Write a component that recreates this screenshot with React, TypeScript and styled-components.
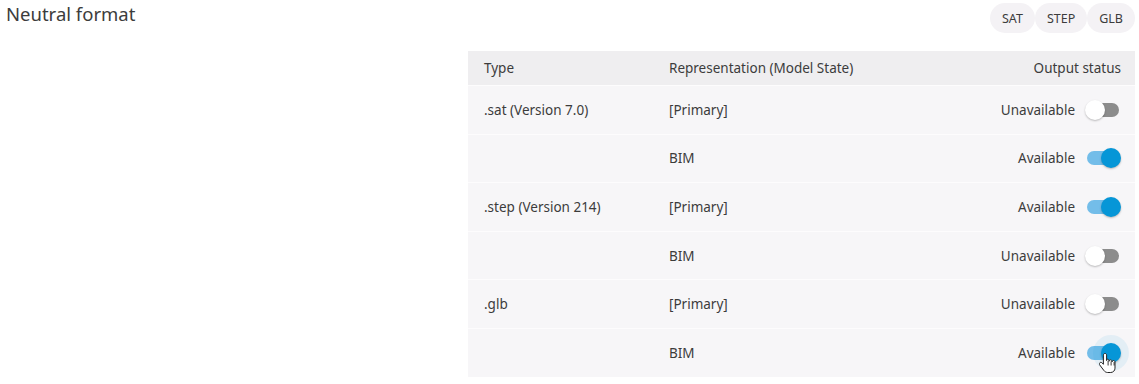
import React from "react";
import styled, { createGlobalStyle } from "styled-components";

const Global = createGlobalStyle`
  html, body { margin: 0; padding: 0; background: #ffffff; }
  body { font-family: "Noto Sans", "Open Sans", sans-serif; color: #3c3c3c; }
`;

const Page = styled.div`
  width: 1139px;
  height: 384px;
  box-sizing: border-box;
  padding: 3px 4px 0 6px;
  display: flex;
  flex-direction: column;
  gap: 18px;
`;

const TopBar = styled.div`
  display: flex;
  justify-content: space-between;
  align-items: flex-start;
`;

const Title = styled.h2`
  margin: 0;
  font-size: 18.5px;
  font-weight: 400;
  line-height: 22px;
  color: #3c3c3c;
`;

const Chips = styled.div`
  display: flex;
`;

const Chip = styled.span`
  height: 30px;
  padding: 0 12px;
  border-radius: 15px;
  background: #f4f2f5;
  display: flex;
  align-items: center;
  font-size: 12.5px;
  color: #3c3c3c;
`;

const Table = styled.div`
  align-self: flex-end;
  width: 667px;
  background: #f7f6f8;
`;

const Row = styled.div<{ $head?: boolean }>`
  display: grid;
  grid-template-columns: 185px 1fr auto;
  align-items: center;
  box-sizing: border-box;
  height: ${(p) => (p.$head ? "34px" : "48.6px")};
  padding: 0 14px 0 16px;
  background: ${(p) => (p.$head ? "#efeef0" : "#f7f6f8")};
  border-top: ${(p) => (p.$head ? "none" : "1px solid #fdfcfd")};
  font-size: 13.5px;
  color: #3c3c3c;
`;

const Cell = styled.div<{ $right?: boolean }>`
  display: flex;
  align-items: center;
  justify-content: ${(p) => (p.$right ? "flex-end" : "flex-start")};
  gap: 10px;
`;

const SwitchWrap = styled.span`
  position: relative;
  width: 36px;
  height: 20px;
  display: inline-flex;
  align-items: center;
`;

const Track = styled.span<{ $on: boolean }>`
  position: absolute;
  left: 2px;
  right: 2px;
  height: 14px;
  border-radius: 7px;
  background: ${(p) => (p.$on ? "#73bde9" : "#8c8c8c")};
`;

const Thumb = styled.span<{ $on: boolean; $hover?: boolean }>`
  position: absolute;
  top: 0;
  left: ${(p) => (p.$on ? "16px" : "0")};
  width: 20px;
  height: 20px;
  border-radius: 50%;
  background: ${(p) => (p.$on ? "#0696d7" : "#ffffff")};
  box-shadow: ${(p) =>
    p.$hover
      ? "0 0 0 8px rgba(6,150,215,0.08), 0 1px 2px rgba(0,0,0,0.25)"
      : "0 1px 2px rgba(0,0,0,0.25)"};
`;

const Cursor = styled.svg`
  position: absolute;
  left: 14px;
  top: 9px;
  width: 18px;
  height: 22px;
  pointer-events: none;
`;

function Switch({ on, hover }: { on: boolean; hover?: boolean }) {
  return (
    <SwitchWrap>
      <Track $on={on} />
      <Thumb $on={on} $hover={hover} />
      {hover && (
        <Cursor viewBox="0 0 18 22">
          <path
            d="M6 1.5c-.9 0-1.6.7-1.6 1.6v9.2l-1.3-1.4c-.7-.7-1.8-.7-2.4 0-.5.5-.5 1.4 0 2l4.2 5.6c.9 1.2 2.2 2 3.700 2h3.1c2.4 0 4.3-1.9 4.3-4.3V10c0-.8-.7-1.5-1.5-1.5s-1.5.7-1.5 1.5V9.3c0-.8-.7-1.5-1.5-1.5s-1.5.7-1.5 1.5v-.6c0-.8-.7-1.5-1.5-1.5S7.6 7.8 7.6 8.6V3.1C7.6 2.2 6.9 1.5 6 1.5z"
            fill="#ffffff"
            stroke="#222222"
            strokeWidth="1"
          />
          <path d="M9.1 9v4.5M12.1 9.5v4M15.1 10v3.5" stroke="#222222" strokeWidth="0.9" fill="none" />
        </Cursor>
      )}
    </SwitchWrap>
  );
}

const rows = [
  { type: ".sat (Version 7.0)", rep: "[Primary]", on: false },
  { type: "", rep: "BIM", on: true },
  { type: ".step (Version 214)", rep: "[Primary]", on: true },
  { type: "", rep: "BIM", on: false },
  { type: ".glb", rep: "[Primary]", on: false },
  { type: "", rep: "BIM", on: true, hover: true },
];

export default function App() {
  return (
    <>
      <Global />
      <Page>
        <TopBar>
          <Title>Neutral format</Title>
          <Chips>
            <Chip>SAT</Chip>
            <Chip>STEP</Chip>
            <Chip>GLB</Chip>
          </Chips>
        </TopBar>
        <Table>
          <Row $head>
            <Cell>Type</Cell>
            <Cell>Representation (Model State)</Cell>
            <Cell $right>Output status</Cell>
          </Row>
          {rows.map((r, i) => (
            <Row key={i}>
              <Cell>{r.type}</Cell>
              <Cell>{r.rep}</Cell>
              <Cell $right>
                {r.on ? "Available" : "Unavailable"}
                <Switch on={r.on} hover={r.hover} />
              </Cell>
            </Row>
          ))}
        </Table>
      </Page>
    </>
  );
}
